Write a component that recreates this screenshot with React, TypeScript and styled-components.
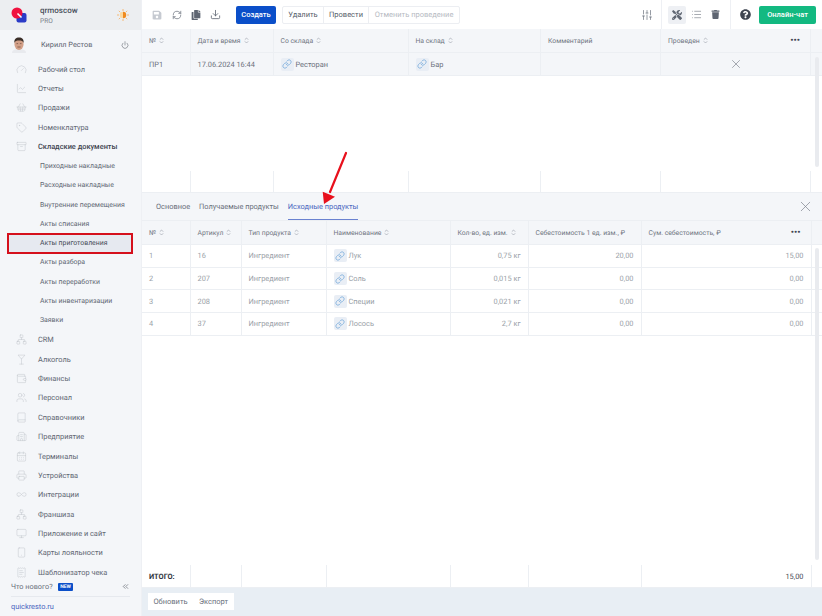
import React from "react";
import styled, { createGlobalStyle } from "styled-components";
import {
  RefreshCw, Download, SlidersVertical, List, X, Link as LinkIcon, Power, ChevronsLeft,
  Gauge, ChartLine, ShoppingBasket, Tag, Archive, Network, Martini, Wallet, Users, Book,
  Building2, CalendarDays, Printer, Infinity as InfinityIcon, Monitor, Smartphone, ReceiptText,
} from "lucide-react";
import { FaSave, FaCopy, FaTools, FaTrash, FaQuestionCircle } from "react-icons/fa";

const Global = createGlobalStyle`
  html, body { margin: 0; padding: 0; background: #fff; }
  body {
    font-family: Roboto, "Liberation Sans", sans-serif; font-size: 7.4px; color: #5d6470;
    text-rendering: geometricPrecision;
  }
  * { box-sizing: border-box; }
`;

const Page = styled.div`
  position: relative; display: flex; width: 822px; height: 616px; overflow: hidden;
`;
const Sidebar = styled.aside`
  width: 142px; height: 616px; flex: none; display: flex; flex-direction: column;
  background: #f4f6f9; border-right: 1px solid #eef0f4;
`;
const Brand = styled.div`
  height: 30px; flex: none; display: flex; align-items: center; padding: 0 11px;
  background: #eceef1; gap: 13px;
`;
const BrandText = styled.div`
  flex: 1; display: flex; flex-direction: column; gap: 1px;
`;
const BrandName = styled.div`font-size: 8px; font-weight: 500; color: #4a505c; line-height: 10px;`;
const BrandPlan = styled.div`font-size: 6.6px; color: #7b818c; line-height: 8px;`;
const UserRow = styled.div`
  height: 29.5px; flex: none; display: flex; align-items: center; padding: 0 12px; gap: 15px;
  font-size: 7.3px; color: #5d6470;
`;
const UserName = styled.div`flex: 1;`;
const Nav = styled.nav`
  display: flex; flex-direction: column; height: 523px; flex: none;
`;
const NavItem = styled.div<{ $strong?: boolean }>`
  height: 19.37px; flex: none; display: flex; align-items: center; padding-left: 16px; gap: 11px;
  font-size: 7.4px; white-space: nowrap; color: ${(p) => (p.$strong ? "#3f4551" : "#626874")};
  font-weight: ${(p) => (p.$strong ? 500 : 400)};
  svg { color: #bcc1c9; flex: none; }
`;
const SubItem = styled.div`
  height: 19.37px; flex: none; display: flex; align-items: center; padding-left: 40px;
  font-size: 6.9px; white-space: nowrap; color: #626874;
`;
const ActiveSubItem = styled.div`
  height: 21px; margin: -1px 8px -1px 6.5px; flex: none; display: flex; align-items: center; padding-left: 31.5px;
  font-size: 6.9px; white-space: nowrap; color: #474d59; background: #e6e9f0;
  border: 2px solid #d5101c; position: relative;
`;
const WhatsNew = styled.div`
  height: 14px; flex: none; display: flex; align-items: center; padding: 0 11px; gap: 5px;
  font-size: 7.3px; color: #6b717c; margin-top: -3px;
`;
const NewBadge = styled.span`
  background: #0b4fc9; color: #fff; font-size: 5px; font-weight: 700; line-height: 8px; padding: 0 2.5px; border-radius: 1px;
`;
const Grow = styled.div`flex: 1;`;
const SideLink = styled.div`
  margin: 2px 11px 0; border-top: 1px solid #e6e9ee; padding-top: 3px; font-size: 7.4px; color: #4a66c0; line-height: 14px;
`;

const Main = styled.main`
  flex: 1; min-width: 0; height: 616px; display: flex; flex-direction: column; background: #fff;
`;
const Toolbar = styled.div`
  height: 29px; flex: none; display: flex; align-items: center; padding-left: 6px; color: #6d7480;
`;
const ToolIcon = styled.div<{ $active?: boolean; $color?: string }>`
  width: 18px; height: 18px; margin-right: 1.5px; display: flex; align-items: center; justify-content: center;
  border-radius: 2px; color: ${(p) => p.$color ?? "#5f6672"};
  background: ${(p) => (p.$active ? "#eef0f4" : "transparent")};
`;
const CreateButton = styled.button`
  width: 40px; height: 18px; margin-left: 10px; border: 0; border-radius: 2px; padding: 0;
  background: #0b4fc9; color: #fff; font: 500 7.5px Roboto, sans-serif;
`;
const ActionGroup = styled.div`
  display: flex; height: 18px; margin-left: 6px; border: 1px solid #eceef2; border-radius: 2px; background: #fff;
`;
const ActionButton = styled.div<{ $w: number; $off?: boolean }>`
  width: ${(p) => p.$w}px; display: flex; align-items: center; justify-content: center; font-size: 7.5px;
  color: ${(p) => (p.$off ? "#b6bac2" : "#555c68")}; border-right: 1px solid #eceef2;
  &:last-child { border-right: 0; }
`;
const ToolDivider = styled.div`
  width: 1px; height: 29px; background: #eef0f4; flex: none; margin: 0 5.5px 0 3.5px;
`;
const ChatButton = styled.button`
  width: 57px; height: 18px; border: 0; border-radius: 2px; padding: 0; margin: 0 6px 0 3.5px;
  background: #13b981; color: #fff; font: 500 7.5px Roboto, sans-serif;
`;

const TopPanel = styled.section`
  height: 164px; flex: none; display: flex; flex-direction: column;
`;
const Row = styled.div<{ $cols: string; $h: number; $bg?: string }>`
  display: grid; grid-template-columns: ${(p) => p.$cols}; height: ${(p) => p.$h}px; flex: none;
  background: ${(p) => p.$bg ?? "transparent"}; border-bottom: 1px solid #eceff3;
`;
const Cell = styled.div<{ $right?: boolean; $muted?: boolean; $pl?: number; $center?: boolean; $bold?: boolean; $strongText?: boolean }>`
  display: flex; align-items: center; gap: 2px; min-width: 0; white-space: nowrap;
  padding: 0 7px 0 ${(p) => p.$pl ?? 7}px; font-size: 7.4px;
  justify-content: ${(p) => (p.$right ? "flex-end" : p.$center ? "center" : "flex-start")};
  color: ${(p) => (p.$bold ? "#2f3540" : p.$strongText ? "#3f4551" : p.$muted ? "#9a9fa8" : "#6a707b")};
  font-weight: ${(p) => (p.$bold ? 700 : 400)};
  border-right: 1px solid #eceff3;
`;
const HeadCell = styled(Cell)`
  font-size: 6.8px; color: #6f7581; justify-content: flex-start; gap: 3px;
`;
const Gutter = styled.div``;
const Dots = styled.span`
  margin-left: auto; margin-right: 3px; font-size: 9px; line-height: 8px; font-weight: 700; color: #3f4551;
`;
const Body = styled.div`
  position: relative; flex: 1; min-height: 0; display: flex; flex-direction: column;
`;
const Blank = styled.div`flex: 1; min-height: 0;`;
const Thumb = styled.div<{ $top: number; $h: number }>`
  position: absolute; right: 3px; top: ${(p) => p.$top}px; width: 4px; height: ${(p) => p.$h}px;
  background: #e9ebef; border-radius: 2px;
`;
const LinkChip = styled.span`
  width: 13px; height: 13px; flex: none; display: inline-flex; align-items: center; justify-content: center;
  background: #e9eef5; border-radius: 2px; color: #5b9bd5;
`;
const Tabs = styled.div`
  height: 28px; flex: none; display: flex; align-items: stretch; background: #f4f6f9; padding: 0 8.5px 0 14px;
  border-bottom: 1px solid #eceff3; gap: 9px; color: #6a707b; font-size: 7.4px;
`;
const Tab = styled.div<{ $active?: boolean }>`
  display: flex; align-items: center; padding-top: 1px; white-space: nowrap;
  color: ${(p) => (p.$active ? "#4a66c0" : "#6a707b")};
  border-bottom: 1px solid ${(p) => (p.$active ? "#6a82d0" : "transparent")};
`;
const TabClose = styled.div`margin-left: auto; display: flex; align-items: center; color: #7d838e;`;
const BottomPanel = styled.section`
  flex: 1; min-height: 0; display: flex; flex-direction: column;
`;
const FooterBar = styled.div`
  height: 29px; flex: none; background: #e8eef4; display: flex; align-items: center; padding-left: 6px; margin-top: -1px;
`;
const FooterButton = styled.div<{ $w: number }>`
  width: ${(p) => p.$w}px; height: 17px; background: #fff; display: flex; align-items: center; justify-content: center;
  font-size: 7.5px; color: #6a707b;
`;
const ArrowLayer = styled.svg`
  position: absolute; left: 318px; top: 148px; pointer-events: none;
`;

const Sort = () => (
  <svg width="5" height="7" viewBox="0 0 6 8" fill="none" stroke="#a4a9b2" strokeWidth="0.9">
    <path d="M1 3l2-2 2 2M1 5l2 2 2-2" />
  </svg>
);
const Logo = () => (
  <svg width="16" height="16" viewBox="0 0 16 16">
    <rect x="5.5" y="6" width="10" height="9.5" rx="2" fill="#2b3bc7" />
    <circle cx="6" cy="6" r="5.5" fill="#f0123f" />
    <path d="M6.5 6.5l4 4" stroke="#fff" strokeWidth="1.6" />
  </svg>
);
const Sun = () => (
  <svg width="14" height="14" viewBox="0 0 14 14">
    <g stroke="#f6b26b" strokeWidth="0.9">
      <path d="M7 1v2M7 11v2M1 7h2M11 7h2M2.8 2.8l1.4 1.4M9.8 9.8l1.4 1.4M2.8 11.2l1.4-1.4M9.8 4.2l1.4-1.4" />
    </g>
    <circle cx="7" cy="7" r="3.2" fill="#fbd9a0" />
    <path d="M7 3.8a3.2 3.2 0 0 1 0 6.4z" fill="#ef8a1f" />
  </svg>
);
const Avatar = () => (
  <svg width="14" height="16" viewBox="0 0 14 16">
    <path d="M0 16c0-3 3-4 7-4s7 1 7 4z" fill="#e8eaee" />
    <ellipse cx="7" cy="7" rx="4.6" ry="6" fill="#d3a088" />
    <path d="M2.4 6C2 2 4 .5 7 .5S12 2 11.6 6C11 3.8 9.5 3.4 7 3.4S3 3.8 2.4 6z" fill="#3a2e28" />
    <path d="M4.5 6.6h1.6M7.9 6.6h1.6M5.4 10h3.2" stroke="#5a3d30" strokeWidth="0.6" />
  </svg>
);
const Chip = () => (
  <LinkChip><LinkIcon size={10} strokeWidth={1.5} /></LinkChip>
);

const I = { size: 11, strokeWidth: 1 };
const topCols = "48.5px 83px 135px 132.5px 120px 150px 1fr";
const botCols = "48.5px 51px 85px 124px 78px 113px 170px 1fr";

const subItems = ["Приходные накладные", "Расходные накладные", "Внутренние перемещения", "Акты списания"];
const subItems2 = ["Акты разбора", "Акты переработки", "Акты инвентаризации", "Заявки"];
const products = [
  ["1", "16", "Лук", "0,75 кг", "20,00", "15,00"],
  ["2", "207", "Соль", "0,015 кг", "0,00", "0,00"],
  ["3", "208", "Специи", "0,021 кг", "0,00", "0,00"],
  ["4", "37", "Лосось", "2,7 кг", "0,00", "0,00"],
];

export default function App() {
  return (
    <Page>
      <Global />
      <Sidebar>
        <Brand>
          <Logo />
          <BrandText>
            <BrandName>qrmoscow</BrandName>
            <BrandPlan>PRO</BrandPlan>
          </BrandText>
          <Sun />
        </Brand>
        <UserRow>
          <Avatar />
          <UserName>Кирилл Рестов</UserName>
          <Power size={8} strokeWidth={1.4} color="#3f4551" />
        </UserRow>
        <Nav>
          <NavItem><Gauge {...I} />Рабочий стол</NavItem>
          <NavItem><ChartLine {...I} />Отчеты</NavItem>
          <NavItem><ShoppingBasket {...I} />Продажи</NavItem>
          <NavItem><Tag {...I} />Номенклатура</NavItem>
          <NavItem $strong><Archive {...I} />Складские документы</NavItem>
          {subItems.map((s) => <SubItem key={s}>{s}</SubItem>)}
          <ActiveSubItem>Акты приготовления</ActiveSubItem>
          {subItems2.map((s) => <SubItem key={s}>{s}</SubItem>)}
          <NavItem><Network {...I} />CRM</NavItem>
          <NavItem><Martini {...I} />Алкоголь</NavItem>
          <NavItem><Wallet {...I} />Финансы</NavItem>
          <NavItem><Users {...I} />Персонал</NavItem>
          <NavItem><Book {...I} />Справочники</NavItem>
          <NavItem><Building2 {...I} />Предприятие</NavItem>
          <NavItem><CalendarDays {...I} />Терминалы</NavItem>
          <NavItem><Printer {...I} />Устройства</NavItem>
          <NavItem><InfinityIcon {...I} />Интеграции</NavItem>
          <NavItem><Network {...I} />Франшиза</NavItem>
          <NavItem><Monitor {...I} />Приложение и сайт</NavItem>
          <NavItem><Smartphone {...I} />Карты лояльности</NavItem>
          <NavItem><ReceiptText {...I} />Шаблонизатор чека</NavItem>
        </Nav>
        <WhatsNew>
          Что нового? <NewBadge>NEW</NewBadge>
          <Grow />
          <ChevronsLeft size={9} strokeWidth={1.5} color="#3f4551" />
        </WhatsNew>
        <SideLink>quickresto.ru</SideLink>
      </Sidebar>
      <Main>
        <Toolbar>
          <ToolIcon $color="#c6cad1"><FaSave size={10} /></ToolIcon>
          <ToolIcon><RefreshCw size={10} strokeWidth={1.6} /></ToolIcon>
          <ToolIcon><FaCopy size={10} /></ToolIcon>
          <ToolIcon><Download size={11} strokeWidth={1.8} /></ToolIcon>
          <CreateButton>Создать</CreateButton>
          <ActionGroup>
            <ActionButton $w={41}>Удалить</ActionButton>
            <ActionButton $w={45}>Провести</ActionButton>
            <ActionButton $w={90} $off>Отменить проведение</ActionButton>
          </ActionGroup>
          <Grow />
          <ToolIcon><SlidersVertical size={12} strokeWidth={1.3} /></ToolIcon>
          <ToolDivider />
          <ToolIcon $active><FaTools size={10} /></ToolIcon>
          <ToolIcon><List size={11} strokeWidth={1.2} /></ToolIcon>
          <ToolIcon><FaTrash size={9} /></ToolIcon>
          <ToolDivider />
          <ToolIcon $color="#3f4551"><FaQuestionCircle size={11} /></ToolIcon>
          <ChatButton>Онлайн-чат</ChatButton>
        </Toolbar>
        <TopPanel>
          <Row $cols={topCols} $h={24} $bg="#f4f6f9">
            <HeadCell>№ <Sort /></HeadCell>
            <HeadCell>Дата и время <Sort /></HeadCell>
            <HeadCell>Со склада <Sort /></HeadCell>
            <HeadCell>На склад <Sort /></HeadCell>
            <HeadCell>Комментарий</HeadCell>
            <HeadCell>Проведен <Sort /><Dots>•••</Dots></HeadCell>
            <Gutter />
          </Row>
          <Body>
            <Row $cols={topCols} $h={23} $bg="#f4f6f9">
              <Cell>ПР1</Cell>
              <Cell>17.06.2024 16:44</Cell>
              <Cell><Chip />Ресторан</Cell>
              <Cell><Chip />Бар</Cell>
              <Cell />
              <Cell $center><X size={14} strokeWidth={1} color="#6a707b" /></Cell>
              <Gutter />
            </Row>
            <Blank />
            <Row $cols={topCols} $h={22}>
              <Cell /><Cell /><Cell /><Cell /><Cell /><Cell /><Gutter />
            </Row>
            <Thumb $top={4} $h={110} />
          </Body>
        </TopPanel>
        <Tabs>
          <Tab>Основное</Tab>
          <Tab>Получаемые продукты</Tab>
          <Tab $active>Исходные продукты</Tab>
          <TabClose><X size={17} strokeWidth={1} /></TabClose>
        </Tabs>
        <BottomPanel>
          <Row $cols={botCols} $h={24} $bg="#f4f6f9">
            <HeadCell>№ <Sort /></HeadCell>
            <HeadCell>Артикул <Sort /></HeadCell>
            <HeadCell>Тип продукта <Sort /></HeadCell>
            <HeadCell>Наименование <Sort /></HeadCell>
            <HeadCell>Кол-во, ед. изм. <Sort /></HeadCell>
            <HeadCell>Себестоимость 1 ед. изм., ₽</HeadCell>
            <HeadCell>Сум. себестоимость, ₽<Dots>•••</Dots></HeadCell>
            <Gutter />
          </Row>
          <Body>
            {products.map((p) => (
              <Row key={p[0]} $cols={botCols} $h={22.7}>
                <Cell $muted>{p[0]}</Cell>
                <Cell $muted>{p[1]}</Cell>
                <Cell $muted>Ингредиент</Cell>
                <Cell $muted><Chip />{p[2]}</Cell>
                <Cell $muted $right>{p[3]}</Cell>
                <Cell $muted $right>{p[4]}</Cell>
                <Cell $muted $right>{p[5]}</Cell>
                <Gutter />
              </Row>
            ))}
            <Blank />
            <Row $cols={botCols} $h={23}>
              <Cell $bold>ИТОГО:</Cell><Cell /><Cell /><Cell /><Cell /><Cell />
              <Cell $right $strongText>15,00</Cell>
              <Gutter />
            </Row>
            <Thumb $top={3} $h={312} />
          </Body>
          <FooterBar>
            <FooterButton $w={45}>Обновить</FooterButton>
            <FooterButton $w={41}>Экспорт</FooterButton>
          </FooterBar>
        </BottomPanel>
      </Main>
      <ArrowLayer width="32" height="62" viewBox="0 0 32 62">
        <path d="M28 5 L12 44" stroke="#e8101c" strokeWidth="2.2" strokeLinecap="round" />
        <path d="M6 56 L4.7 43.7 L17 48.7 Z" fill="#e8101c" />
      </ArrowLayer>
    </Page>
  );
}
